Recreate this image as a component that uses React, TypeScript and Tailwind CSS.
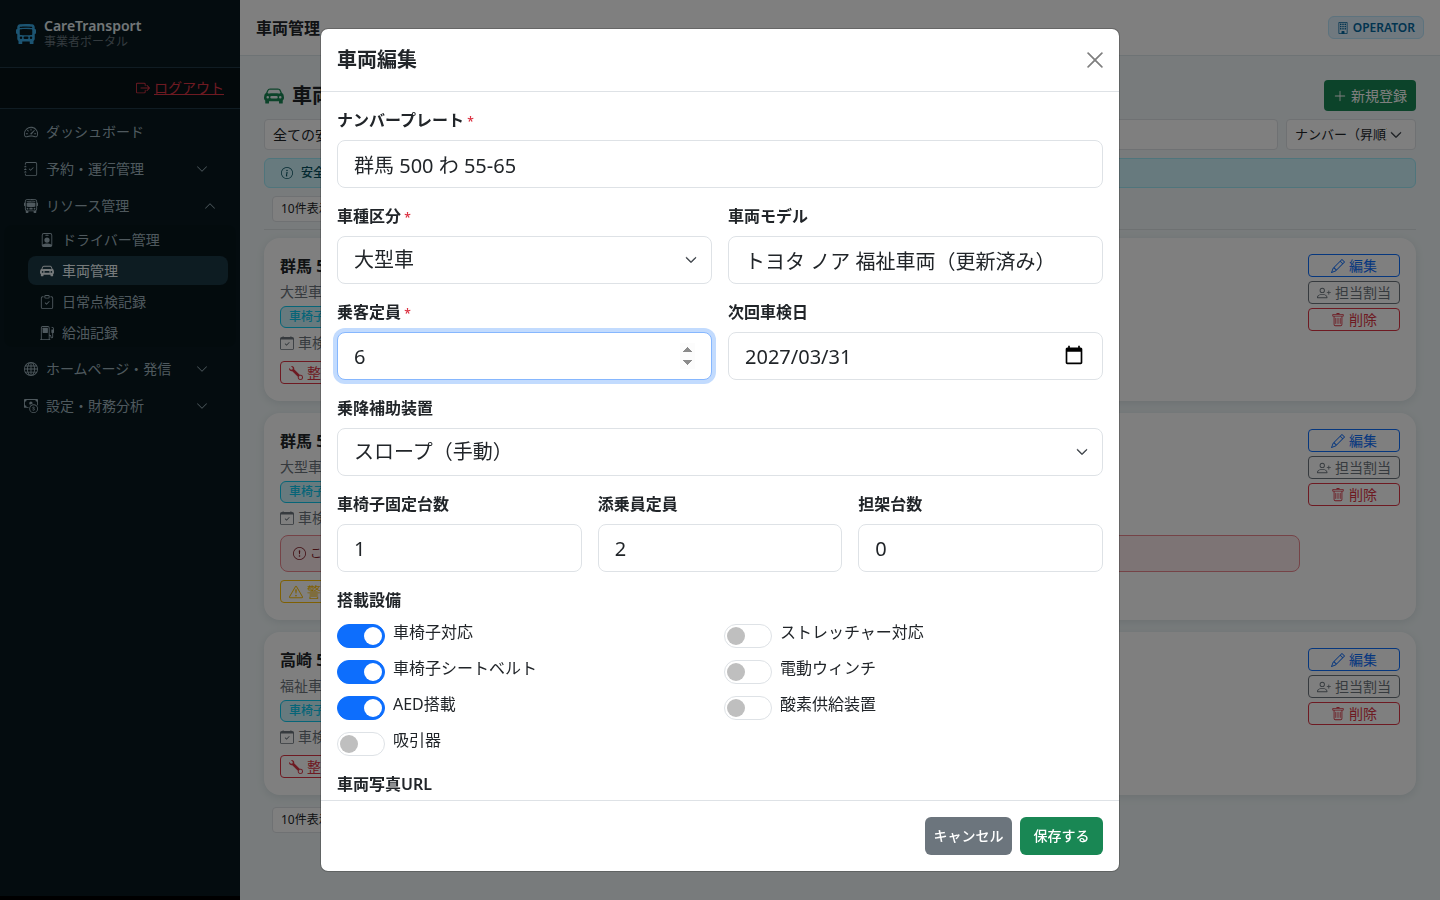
import { useState } from "react"
import type { InputHTMLAttributes, ReactNode } from "react"
import type { IconType } from "react-icons"
import {
  BsBoxArrowRight,
  BsBuilding,
  BsBusFront,
  BsBusFrontFill,
  BsCalendarCheck,
  BsCarFrontFill,
  BsCashCoin,
  BsChevronDown,
  BsChevronUp,
  BsClipboardCheck,
  BsExclamationCircle,
  BsExclamationTriangle,
  BsFuelPump,
  BsGlobe,
  BsInfoCircle,
  BsJournalCheck,
  BsPencil,
  BsPersonBadge,
  BsPersonPlus,
  BsPlusLg,
  BsSpeedometer2,
  BsTrash,
  BsWrench,
  BsXLg,
} from "react-icons/bs"

/* ---------- sidebar ---------- */

function NavItem({ icon: Icon, label, state }: { icon: IconType; label: string; state?: "open" | "closed" }) {
  return (
    <a href="#" className="mb-[2px] flex h-[35px] items-center gap-2 pl-6 text-sm text-[#9fb3bd]">
      <Icon className="size-[14px] shrink-0" />
      <span className="flex-1">{label}</span>
      {state === "closed" && <BsChevronDown className="mr-8 size-3" />}
      {state === "open" && <BsChevronUp className="mr-6 size-3" />}
    </a>
  )
}

function SubItem({ icon: Icon, label, active }: { icon: IconType; label: string; active?: boolean }) {
  return (
    <a
      href="#"
      className={
        active
          ? "ml-6 mr-2 flex h-[29px] items-center gap-2 rounded-lg bg-[#1b3844] pl-3 text-sm text-[#eef6f9]"
          : "ml-6 mr-2 flex h-[29px] items-center gap-2 rounded-lg pl-3 text-sm text-[#9fb3bd]"
      }
    >
      <Icon className="size-[14px] shrink-0" />
      {label}
    </a>
  )
}

function Sidebar() {
  return (
    <aside className="flex w-60 shrink-0 flex-col border-b-4 border-black bg-[#08191f]">
      <div className="flex h-[68px] items-center gap-2 border-b border-[#203846] px-4">
        <BsBusFrontFill className="size-5 text-[#38a9e4]" />
        <div>
          <p className="text-sm leading-4 font-semibold text-[#e4edf1]">CareTransport</p>
          <p className="text-xs leading-4 text-[#66747c]">事業者ポータル</p>
        </div>
      </div>
      <div className="flex h-[41px] items-center justify-end border-b border-[#203846] bg-black/25 px-4">
        <a href="#" className="flex items-center gap-1 text-sm text-[#dc3545]">
          <BsBoxArrowRight className="size-[14px]" />
          <span className="underline">ログアウト</span>
        </a>
      </div>
      <nav className="pt-[5px]">
        <NavItem icon={BsSpeedometer2} label="ダッシュボード" />
        <NavItem icon={BsJournalCheck} label="予約・運行管理" state="closed" />
        <NavItem icon={BsBusFront} label="リソース管理" state="open" />
        <div className="mx-1 mb-1 flex flex-col gap-[2px] rounded-lg bg-black/10">
          <SubItem icon={BsPersonBadge} label="ドライバー管理" />
          <SubItem icon={BsCarFrontFill} label="車両管理" active />
          <SubItem icon={BsClipboardCheck} label="日常点検記録" />
          <SubItem icon={BsFuelPump} label="給油記録" />
        </div>
        <NavItem icon={BsGlobe} label="ホームページ・発信" state="closed" />
        <NavItem icon={BsCashCoin} label="設定・財務分析" state="closed" />
      </nav>
    </aside>
  )
}

/* ---------- vehicle list ---------- */

function CardButton({ icon: Icon, label, tone }: { icon: IconType; label: string; tone: "blue" | "gray" | "red" }) {
  const tones = {
    blue: "border-[#0d6efd] text-[#0d6efd]",
    gray: "border-[#6c757d] text-[#6c757d]",
    red: "border-[#dc3545] text-[#dc3545]",
  }
  return (
    <button className={`flex h-[23px] items-center justify-center gap-1 rounded border text-sm leading-5 ${tones[tone]}`}>
      <Icon className="size-[14px]" />
      {label}
    </button>
  )
}

function VehicleCard({ plate, kind, warning }: { plate: string; kind: string; warning?: boolean }) {
  return (
    <article className="flex items-start gap-2 rounded-2xl bg-white px-4 pt-4 pb-[17px] shadow-[0_2px_8px_rgba(8,40,50,0.1)]">
      <div className="min-w-0 flex-1">
        <h3 className="leading-6 font-bold text-[#212529]">{plate}</h3>
        <p className="mt-[3px] text-sm leading-[21px] text-[#6c757d]">{kind}</p>
        <span className="mt-1 block h-[22px] w-fit rounded-md border border-[#0dcaf0] bg-[#cff4fc] px-2 text-xs leading-5 font-medium text-[#0dcaf0]">
          車椅子
        </span>
        <p className="mt-1 flex items-center gap-1 text-sm leading-[21px] text-[#6c757d]">
          <BsCalendarCheck className="size-[14px]" />
          車検
        </p>
        {warning && (
          <p className="mt-[7px] flex h-[37px] items-center gap-1 rounded-lg border border-[#ea868f] bg-[#fbe9eb] px-3 text-xs text-[#842029]">
            <BsExclamationCircle className="size-[13px]" />
            この
          </p>
        )}
        {warning ? (
          <button className="mt-2 flex h-[23px] items-center gap-1 rounded border border-[#ffc107] px-2 text-sm leading-5 text-[#ffc107]">
            <BsExclamationTriangle className="size-[14px]" />
            警告
          </button>
        ) : (
          <button className="mt-2 flex h-[23px] items-center gap-1 rounded border border-[#dc3545] px-2 text-sm leading-5 text-[#dc3545]">
            <BsWrench className="size-[14px]" />
            整備
          </button>
        )}
      </div>
      <div className="flex w-[92px] flex-col gap-1">
        <CardButton icon={BsPencil} label="編集" tone="blue" />
        <CardButton icon={BsPersonPlus} label="担当割当" tone="gray" />
        <CardButton icon={BsTrash} label="削除" tone="red" />
      </div>
    </article>
  )
}

function PageSize() {
  return (
    <select
      aria-label="表示件数"
      className="ml-2 block h-[26px] w-24 appearance-none rounded border border-[#dee2e6] bg-white px-2 text-xs text-[#212529]"
    >
      <option>10件表示</option>
    </select>
  )
}

function VehiclePage() {
  return (
    <div className="min-w-0 flex-1 bg-[#f0f7f8]">
      <header className="flex h-14 items-center justify-between border-b border-[#dce7ea] bg-white px-4">
        <h1 className="font-semibold text-[#212529]">車両管理</h1>
        <span className="flex h-[23px] items-center gap-1 rounded-md border border-[#bae6fd] bg-[#e0f2fe] px-2 text-xs font-semibold text-[#0369a1]">
          <BsBuilding className="size-3" />
          OPERATOR
        </span>
      </header>
      <main className="p-6">
        <div className="flex items-center justify-between">
          <h2 className="flex items-center gap-2 text-xl font-bold text-[#212529]">
            <BsCarFrontFill className="text-[#198754]" />
            車両管理
          </h2>
          <button className="flex h-[31px] w-[92px] items-center justify-center gap-1 rounded bg-[#198754] text-sm text-white">
            <BsPlusLg className="size-[14px]" />
            新規登録
          </button>
        </div>
        <div className="mt-2 flex gap-2">
          <select
            aria-label="安全状態"
            className="h-[31px] w-40 appearance-none rounded border border-[#dee2e6] bg-white px-2 text-sm text-[#212529]"
          >
            <option>全ての安全状態</option>
          </select>
          <input
            aria-label="検索"
            className="h-[31px] min-w-0 flex-1 rounded border border-[#dee2e6] bg-white px-2 text-sm"
          />
          <div className="relative w-[130px]">
            <select
              aria-label="並び順"
              className="h-[31px] w-full appearance-none rounded border border-[#dee2e6] bg-white pr-7 pl-2 text-[13px] text-[#212529]"
            >
              <option>ナンバー（昇順）</option>
            </select>
            <BsChevronDown className="pointer-events-none absolute top-[10px] right-[14px] size-3 stroke-1 text-[#343a40]" />
          </div>
        </div>
        <p className="mt-2 flex h-[30px] items-center gap-2 rounded-md border border-[#9eeaf9] bg-[#cff4fc] px-4 text-xs font-medium text-[#055160]">
          <BsInfoCircle className="size-3" />
          安全点検
        </p>
        <div className="mt-2 mb-2 border-b border-[#dce2e4] pb-[7px]">
          <PageSize />
        </div>
        <div className="flex flex-col gap-3">
          <VehicleCard plate="群馬 500" kind="大型車" />
          <VehicleCard plate="群馬 500" kind="大型車" warning />
          <VehicleCard plate="高崎 500" kind="福祉車両" />
          <PageSize />
        </div>
      </main>
    </div>
  )
}

/* ---------- edit dialog ---------- */

const control =
  "block h-12 w-full appearance-none rounded-lg border border-[#dee2e6] bg-white px-4 text-xl text-[#212529] outline-none focus:border-[#86b7fe] focus:shadow-[0_0_0_4px_rgba(13,110,253,0.25)]"

function Field({ id, label, required, children }: { id: string; label: string; required?: boolean; children: ReactNode }) {
  return (
    <div className="min-w-0">
      <label htmlFor={id} className="mb-2 block leading-6 font-semibold">
        {label}
        {required && <span className="text-xs text-[#dc3545]"> *</span>}
      </label>
      {children}
    </div>
  )
}

function NumberInput(props: InputHTMLAttributes<HTMLInputElement>) {
  return <input type="number" className={control} {...props} />
}

function SelectInput({ id, value }: { id: string; value: string }) {
  return (
    <div className="relative">
      <select id={id} className={control}>
        <option>{value}</option>
      </select>
      <BsChevronDown className="pointer-events-none absolute top-[18px] right-[15px] size-3 stroke-1 text-[#343a40]" />
    </div>
  )
}

function Switch({ label, on }: { label: string; on?: boolean }) {
  const [checked, setChecked] = useState(Boolean(on))
  return (
    <label className="flex items-start gap-2">
      <input
        type="checkbox"
        role="switch"
        checked={checked}
        onChange={(e) => setChecked(e.target.checked)}
        className="mt-1 h-6 w-12 appearance-none rounded-full border border-[#dee2e6] bg-white p-[2px] before:block before:size-[18px] before:rounded-full before:bg-[#bfbfbf] checked:border-[#0d6efd] checked:bg-[#0d6efd] checked:before:translate-x-6 checked:before:bg-white"
      />
      <span className="leading-6">{label}</span>
    </label>
  )
}

function CalendarIcon() {
  return (
    <svg viewBox="0 0 24 24" className="size-5" fill="currentColor">
      <path d="M20 3h-1V1h-2v2H7V1H5v2H4c-1.1 0-2 .9-2 2v16c0 1.1.9 2 2 2h16c1.1 0 2-.9 2-2V5c0-1.1-.9-2-2-2zm0 18H4V8h16v13z" />
    </svg>
  )
}

function EditDialog() {
  return (
    <div className="fixed inset-0 flex justify-center bg-black/50 py-7">
      <div
        role="dialog"
        aria-labelledby="dialog-title"
        className="flex w-full max-w-[800px] flex-col overflow-hidden rounded-lg border border-black/20 bg-white bg-clip-padding text-[#212529]"
      >
        <div className="flex h-[63px] shrink-0 items-center justify-between border-b border-[#dee2e6] px-4">
          <h2 id="dialog-title" className="text-xl font-semibold">
            車両編集
          </h2>
          <button aria-label="閉じる" className="text-[#7f7f7f]">
            <BsXLg className="size-4 scale-125 stroke-[0.5]" />
          </button>
        </div>

        <form className="flex min-h-0 flex-1 flex-col gap-4 overflow-y-auto p-4 [scrollbar-width:none]">
          <Field id="plate" label="ナンバープレート" required>
            <input id="plate" className={control} defaultValue="群馬 500 わ 55-65" />
          </Field>
          <div className="grid grid-cols-2 gap-4">
            <Field id="category" label="車種区分" required>
              <SelectInput id="category" value="大型車" />
            </Field>
            <Field id="model" label="車両モデル">
              <input id="model" className={control} defaultValue="トヨタ ノア 福祉車両（更新済み）" />
            </Field>
            <Field id="capacity" label="乗客定員" required>
              <input
                id="capacity"
                type="number"
                autoFocus
                defaultValue={6}
                className={`${control} caret-transparent [&::-webkit-inner-spin-button]:opacity-100`}
              />
            </Field>
            <Field id="inspection" label="次回車検日">
              <div className="relative">
                <input id="inspection" className={control} defaultValue="2027/03/31" />
                <button type="button" aria-label="日付を選択" className="absolute top-[13px] right-[19px] text-black">
                  <CalendarIcon />
                </button>
              </div>
            </Field>
          </div>
          <Field id="lift" label="乗降補助装置">
            <SelectInput id="lift" value="スロープ（手動）" />
          </Field>
          <div className="grid grid-cols-3 gap-4">
            <Field id="wheelchairs" label="車椅子固定台数">
              <NumberInput id="wheelchairs" defaultValue={1} />
            </Field>
            <Field id="attendants" label="添乗員定員">
              <NumberInput id="attendants" defaultValue={2} />
            </Field>
            <Field id="stretchers" label="担架台数">
              <NumberInput id="stretchers" defaultValue={0} />
            </Field>
          </div>
          <fieldset>
            <legend className="mb-2 leading-6 font-semibold">搭載設備</legend>
            <div className="grid grid-cols-2 gap-2">
              <Switch label="車椅子対応" on />
              <Switch label="ストレッチャー対応" />
              <Switch label="車椅子シートベルト" on />
              <Switch label="電動ウィンチ" />
              <Switch label="AED搭載" on />
              <Switch label="酸素供給装置" />
              <Switch label="吸引器" />
            </div>
          </fieldset>
          <Field id="photo" label="車両写真URL">
            <input id="photo" type="url" className={control} />
          </Field>
        </form>

        <div className="flex shrink-0 justify-end gap-2 border-t border-[#dee2e6] p-4">
          <button className="h-[38px] w-[87px] rounded-md bg-[#6c757d] text-sm font-medium text-white">キャンセル</button>
          <button className="h-[38px] w-[83px] rounded-md bg-[#198754] text-sm font-medium text-white">保存する</button>
        </div>
      </div>
    </div>
  )
}

export default function App() {
  return (
    <div className="flex h-screen overflow-hidden font-['Noto_Sans','Noto_Sans_CJK_JP',sans-serif]">
      <Sidebar />
      <VehiclePage />
      <EditDialog />
    </div>
  )
}
